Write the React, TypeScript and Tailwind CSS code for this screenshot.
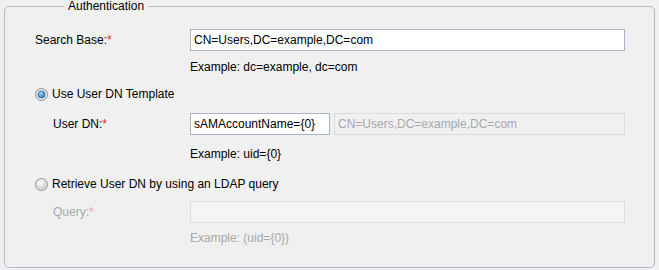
import type { ReactNode } from "react";

function Radio({ checked }: { checked?: boolean }) {
  return (
    <svg width="13" height="13" viewBox="0 0 13 13" className="shrink-0">
      <defs>
        <radialGradient id={checked ? "rOn" : "rOff"} cx="40%" cy="35%" r="70%">
          <stop offset="0%" stopColor={checked ? "#9fd8ff" : "#ffffff"} />
          <stop offset="100%" stopColor={checked ? "#1f6fb2" : "#c8c8c8"} />
        </radialGradient>
      </defs>
      <circle cx="6.5" cy="6.5" r="6" fill="#e8e8e8" stroke="#8f8f8f" strokeWidth="1" />
      {checked ? (
        <circle cx="6.5" cy="6.5" r="3.6" fill="url(#rOn)" stroke="#2a5f8f" strokeWidth="0.6" />
      ) : (
        <circle cx="6.5" cy="6.5" r="5" fill="url(#rOff)" />
      )}
    </svg>
  );
}

function Label({ children, indent, disabled }: { children: ReactNode; indent?: boolean; disabled?: boolean }) {
  return (
    <div className={`w-[155px] shrink-0 ${indent ? "pl-[18px]" : ""} ${disabled ? "text-[#a8a8a8]" : "text-black"}`}>
      {children}
      <span className={disabled ? "text-[#f0a0a0]" : "text-[#e31b1b]"}>*</span>
    </div>
  );
}

function Hint({ children, disabled }: { children: ReactNode; disabled?: boolean }) {
  return (
    <div className={`ml-[155px] h-[14px] leading-[14px] ${disabled ? "text-[#a8a8a8]" : "text-black"}`}>
      {children}
    </div>
  );
}

export default function App() {
  return (
    <div className="h-[270px] w-[659px] bg-[#f0f0f0] font-['Liberation_Sans',Arial,sans-serif] text-[12px] leading-[14px]">
      <fieldset className="mx-[4px] h-[268px] rounded-[5px] border border-[#b9b9cc] pl-[30px]">
        <legend className="ml-[29px] px-[4px] leading-[13px] text-black">Authentication</legend>

        <div className="mt-[16px] flex h-[22px] items-center">
          <Label>Search Base:</Label>
          <div className="flex h-[22px] w-[435px] items-center border border-[#abb3c9] bg-white pl-[3px] text-black">
            CN=Users,DC=example,DC=com
          </div>
        </div>
        <div className="mt-[9px]">
          <Hint>Example: dc=example, dc=com</Hint>
        </div>

        <div className="mt-[13px] flex h-[14px] items-center gap-[4px]">
          <Radio checked />
          <span className="text-black">Use User DN Template</span>
        </div>

        <div className="mt-[12px] flex h-[22px] items-center">
          <Label indent>User DN:</Label>
          <div className="flex h-[22px] w-[140px] items-center border border-[#abb3c9] bg-white pl-[3px] text-black">
            sAMAccountName={"{0}"}
          </div>
          <div className="ml-[4px] flex h-[22px] w-[291px] items-center border border-[#dcdce4] bg-[#f0f0f0] pl-[3px] text-[#a8a8a8]">
            CN=Users,DC=example,DC=com
          </div>
        </div>
        <div className="mt-[12px]">
          <Hint>Example: uid={"{0}"}</Hint>
        </div>

        <div className="mt-[16px] flex h-[14px] items-center gap-[4px]">
          <Radio />
          <span className="text-black">Retrieve User DN by using an LDAP query</span>
        </div>

        <div className="mt-[10px] flex h-[22px] items-center">
          <Label indent disabled>Query:</Label>
          <div className="h-[22px] w-[435px] border border-[#dcdce4] bg-[#f4f4f4]" />
        </div>
        <div className="mt-[8px]">
          <Hint disabled>Example: (uid={"{0}"})</Hint>
        </div>
      </fieldset>
    </div>
  );
}
